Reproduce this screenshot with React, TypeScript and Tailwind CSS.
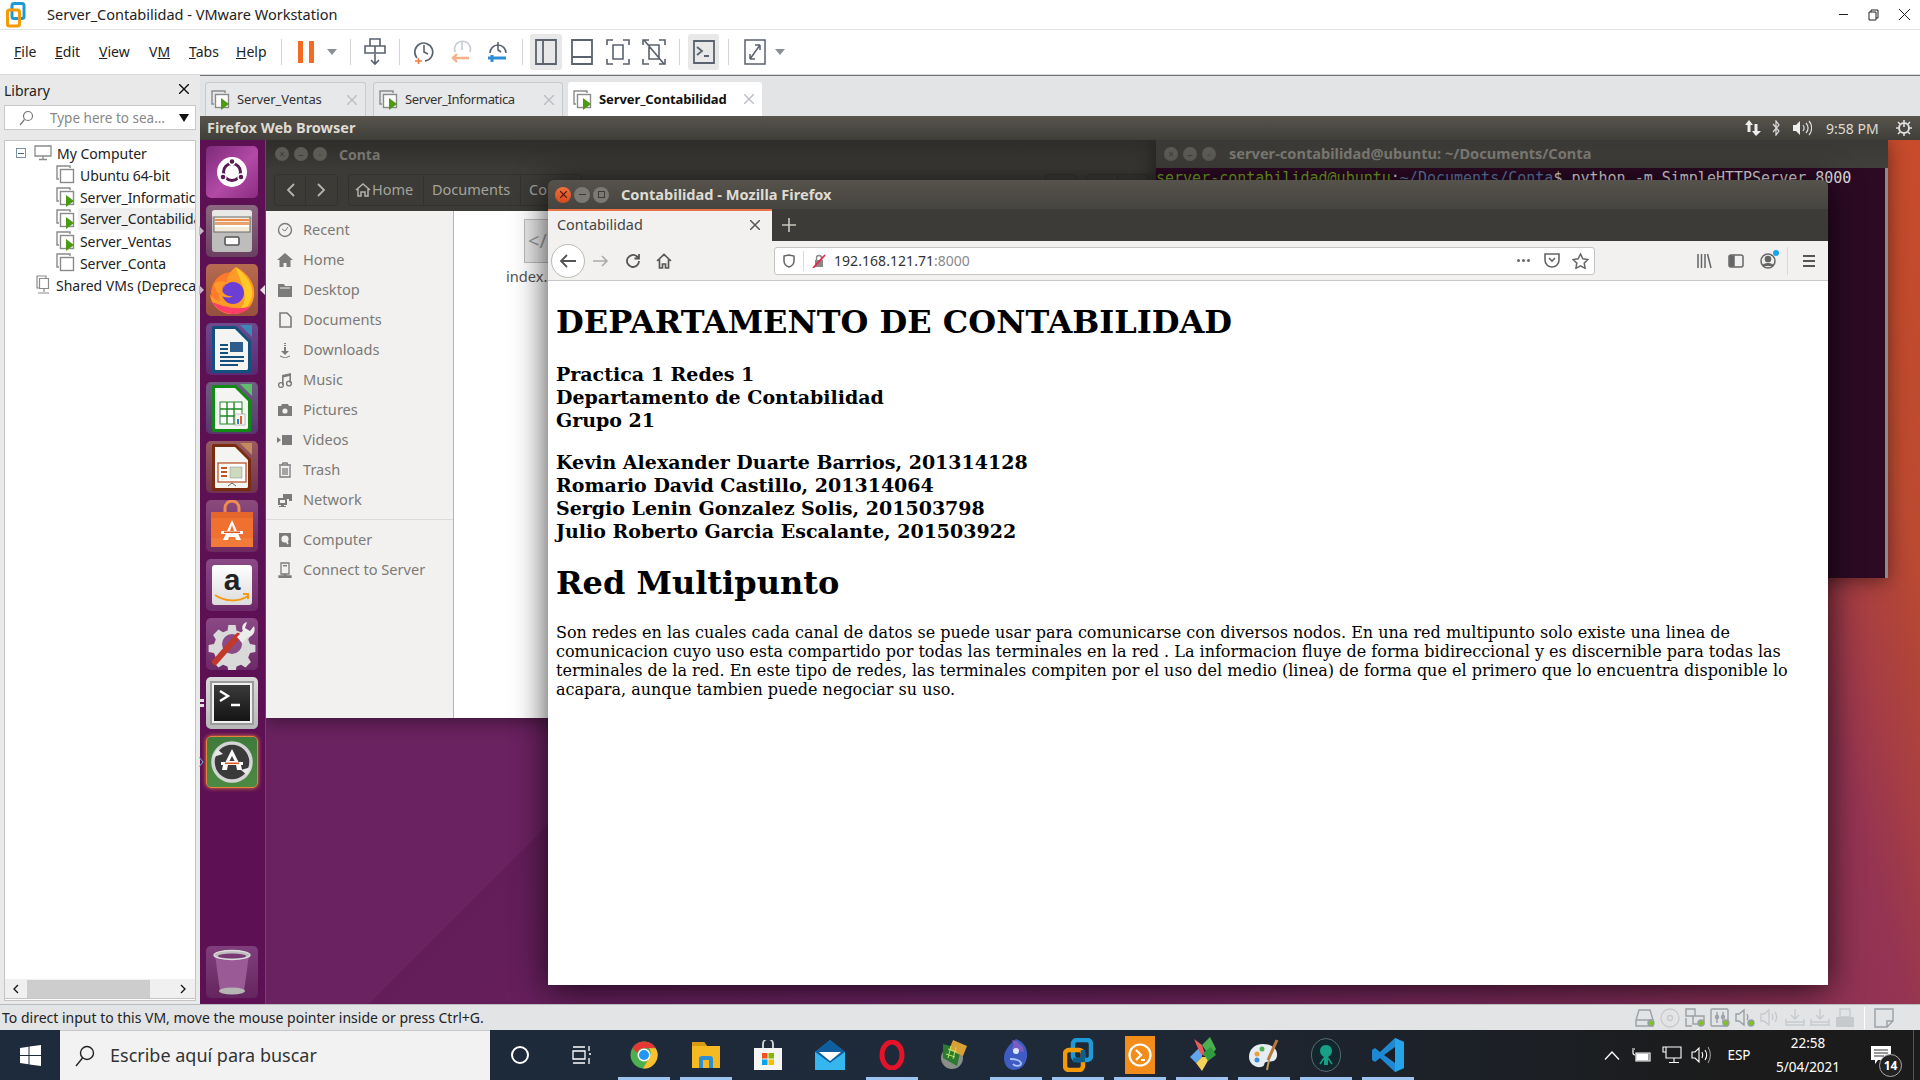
import React from "react";

const Caret = ({ c = "#6b7280" }: { c?: string }) => (
  <svg width="10" height="6" viewBox="0 0 10 6"><path d="M0 0h10L5 6z" fill={c} /></svg>
);

const Sep = () => <div className="w-px h-[26px] bg-[#d4d4d4]" />;

const TB = ({ children, w = 36, active = false }: { children: React.ReactNode; w?: number; active?: boolean }) => (
  <div
    className={active ? "flex items-center justify-center h-[36px] rounded-[3px] bg-[#e8e8e8]" : "flex items-center justify-center h-[36px]"}
    style={{ width: w }}
  >
    {children}
  </div>
);

const S = "#59626e";

function Toolbar() {
  return (
    <div className="h-[45px] bg-white border-b border-[#d9d9d9] flex items-center font-['Noto_Sans',sans-serif] text-[14px] text-[#222] shrink-0">
      <div className="flex items-center pl-[14px] pb-[2px] w-[281px] shrink-0">
        <span className="w-[41px]"><u>F</u>ile</span>
        <span className="w-[44px]"><u>E</u>dit</span>
        <span className="w-[50px]"><u>V</u>iew</span>
        <span className="w-[40px]">V<u>M</u></span>
        <span className="w-[47px]"><u>T</u>abs</span>
        <span><u>H</u>elp</span>
      </div>
      <Sep />
      <div className="w-[16px]" />
      <div className="flex gap-[6px] w-[16px]">
        <div className="w-[5px] h-[22px] bg-[#f26b21]" />
        <div className="w-[5px] h-[22px] bg-[#f26b21]" />
      </div>
      <div className="w-[28px] flex justify-center pl-[8px]"><Caret c="#8a8f96" /></div>
      <div className="w-[8px]" />
      <Sep />
      <TB w={48}>
        <svg width="24" height="30" viewBox="0 0 24 30" fill="none" stroke={S} strokeWidth="1.6">
          <path d="M7 2h10v7H7zM2 9h20v7H2zM12 9v7M12 17v9M8 23l4 4 4-4" />
        </svg>
      </TB>
      <Sep />
      <TB w={47}>
        <svg width="24" height="26" viewBox="0 0 24 26" fill="none" stroke={S} strokeWidth="1.6">
          <path d="M5 19A9 9 0 1 1 13 22M12 6v7l4 2" />
          <path d="M3 22h7M6.5 19v6" stroke="#f37a3a" />
        </svg>
      </TB>
      <TB w={30}>
        <svg width="24" height="26" viewBox="0 0 24 26" fill="none" stroke="#c7ccd2" strokeWidth="1.6">
          <path d="M5 13A8 8 0 1 1 20 13M12 3v8" />
          <path d="M2 19h17M7 15l-4 4 4 4" stroke="#f7b08a" strokeWidth="2.4" />
        </svg>
      </TB>
      <TB w={41}>
        <svg width="24" height="26" viewBox="0 0 24 26" fill="none" stroke={S} strokeWidth="1.6">
          <path d="M4 14A8 8 0 1 1 20 14M12 3v8l3 2" />
          <path d="M2 19h18" stroke="#2b8ed6" strokeWidth="3" />
          <path d="M6 16v7" stroke="#2b8ed6" strokeWidth="3" />
        </svg>
      </TB>
      <div className="w-[4px]" />
      <Sep />
      <div className="w-[7px]" />
      <TB w={32} active>
        <svg width="22" height="26" viewBox="0 0 22 26" fill="none" stroke={S} strokeWidth="1.8"><path d="M1 1h20v24H1zM8 1v24" /></svg>
      </TB>
      <TB w={40}>
        <svg width="22" height="26" viewBox="0 0 22 26" fill="none" stroke={S} strokeWidth="1.8"><path d="M1 1h20v24H1zM1 18h20" /></svg>
      </TB>
      <TB w={32}>
        <svg width="24" height="26" viewBox="0 0 24 26" fill="none" stroke={S} strokeWidth="1.6"><path d="M1 6V1h6M17 1h6v5M1 20v5h6M23 20v5h-6M7 6h10v14H7z" /></svg>
      </TB>
      <TB w={40}>
        <svg width="24" height="26" viewBox="0 0 24 26" fill="none" stroke={S} strokeWidth="1.6"><path d="M1 6V1h6M17 1h6v5M1 20v5h6M23 20v5h-6M7 6h10v14H7zM2 1l20 24" /></svg>
      </TB>
      <div className="w-[5px]" />
      <Sep />
      <div className="w-[8px]" />
      <TB w={31} active>
        <svg width="22" height="24" viewBox="0 0 22 24" fill="none" stroke={S} strokeWidth="1.8"><path d="M1 1h20v22H1zM4 7l5 4-5 4M11 16h5" /></svg>
      </TB>
      <div className="w-[9px]" />
      <Sep />
      <TB w={51}>
        <svg width="22" height="26" viewBox="0 0 22 26" fill="none" stroke={S} strokeWidth="1.5"><path d="M1 1h20v24H1zM6 20l10-14M16 6h-5M16 6v5M6 20h5M6 20v-5" /></svg>
      </TB>
      <div className="ml-[-5px]"><Caret c="#8a8f96" /></div>
    </div>
  );
}

const VmIcon = ({ run }: { run?: boolean }) => (
  <svg className="shrink-0" width="20" height="20" viewBox="0 0 20 20" fill="none">
    <path d="M3 14H1V1h13v2" stroke="#8a8a8a" strokeWidth="1.4" />
    <rect x="4.5" y="4.5" width="13" height="13" fill="#fff" stroke="#8a8a8a" strokeWidth="1.4" />
    {run && <path d="M10 8l8 6-8 6z" fill="#4c9a12" />}
  </svg>
);

const MonitorIcon = () => (
  <svg width="18" height="16" viewBox="0 0 18 16" fill="none" stroke="#8b8b8b" strokeWidth="1.3"><path d="M1 1h16v10H1zM9 11v3M5 14.5h8" /></svg>
);

function Library() {
  return (
    <div className="w-[200px] shrink-0 bg-[#e9e9ea] flex flex-col font-['Noto_Sans',sans-serif] text-[14px] text-[#222]">
      <div className="h-[30px] flex items-center justify-between pl-[4px] pr-[11px]">
        <span>Library</span>
        <svg className="mb-[2px]" width="10" height="10" viewBox="0 0 10 10" stroke="#111" strokeWidth="1.4"><path d="M0 0l10 10M10 0L0 10" /></svg>
      </div>
      <div className="mx-[4px] w-[192px] h-[25px] bg-white border border-[#c9c9c9] flex items-center pl-[13px] pr-[6px] shrink-0">
        <svg width="16" height="16" viewBox="0 0 16 16" fill="none" stroke="#777" strokeWidth="1.2"><circle cx="10" cy="6" r="4.5" /><path d="M6.5 9.5L2 15" /></svg>
        <span className="ml-[16px] text-[#888] flex-1 text-[13.5px] pt-[2px]">Type here to sea...</span>
        <svg width="10" height="8" viewBox="0 0 10 8"><path d="M0 0h10L5 8z" fill="#111" /></svg>
      </div>
      <div className="h-[10px] shrink-0" />
      <div className="mx-[4px] w-[192px] flex-1 bg-white border border-[#c4c4c4] pt-[1px] overflow-hidden">
        <div className="h-[22px] flex items-center pl-[11px] whitespace-nowrap">
          <div className="w-[10px] h-[10px] border border-[#7d90a8] flex items-center justify-center"><div className="w-[6px] h-px bg-[#4a5a70]" /></div>
          <div className="ml-[8px]"><MonitorIcon /></div>
          <span className="ml-[5px]">My Computer</span>
        </div>
        <div>
          {[
            ["Ubuntu 64-bit", false, false],
            ["Server_Informatica", true, false],
            ["Server_Contabilidad", true, true],
            ["Server_Ventas", true, false],
            ["Server_Conta", false, false],
          ].map(([n, r, s]) => (
            <div key={n as string} className="h-[22px] flex items-center pl-[51px] whitespace-nowrap overflow-hidden">
              <div className="w-[22px] shrink-0"><VmIcon run={r as boolean} /></div>
              <div className={s ? "bg-[#f0f0f0] flex-1 h-[22px] leading-[22px] pl-[2px] overflow-hidden tracking-[-0.1px]" : "flex-1 pl-[2px] overflow-hidden tracking-[-0.1px]"}>{n as string}</div>
            </div>
          ))}
        </div>
        <div className="h-[22px] flex items-center pl-[31px] whitespace-nowrap overflow-hidden">
          <svg className="shrink-0" width="14" height="20" viewBox="0 0 14 20" fill="none" stroke="#8b8b8b" strokeWidth="1.2"><path d="M3 13H1V1h9v2M3.5 3.5h9v10h-9zM8 14v3M2 18h11" /></svg>
          <span className="ml-[6px]">Shared VMs (Deprecated)</span>
        </div>
      </div>
      <div className="mx-[4px] w-[192px] h-[20px] bg-[#f0f0f0] border border-t-0 border-[#c4c4c4] flex items-center shrink-0 mt-[-22px] mb-[2px] relative">
        <svg className="ml-[8px]" width="6" height="10" viewBox="0 0 6 10" fill="none" stroke="#111" strokeWidth="1.3"><path d="M5 1L1 5l4 4" /></svg>
        <div className="ml-[8px] w-[123px] h-[18px] bg-[#cdcdcd]" />
        <svg className="ml-[30px]" width="6" height="10" viewBox="0 0 6 10" fill="none" stroke="#111" strokeWidth="1.3"><path d="M1 1l4 4-4 4" /></svg>
      </div>
      <div className="h-[3px] shrink-0" />
    </div>
  );
}

const VmTab = ({ name, w, active, ml, tight }: { name: string; w: number; active?: boolean; ml: number; tight?: boolean }) => (
  <div
    className={
      active
        ? "h-[34px] bg-white rounded-t-[3px] flex items-center pl-[5px] pr-[8px] justify-between text-[#111] font-bold text-[13px]"
        : "h-[34px] bg-[#e7e8ea] border border-b-0 border-[#c9cacc] rounded-t-[3px] flex items-center pl-[5px] pr-[8px] justify-between text-[#333] text-[13px]"
    }
    style={{ width: w, marginLeft: ml }}
  >
    <div className="flex items-center gap-[6px] pt-[1px]">
      <VmIcon run />
      <span className={tight ? "tracking-[-0.35px]" : "tracking-[-0.1px]"}>{name}</span>
    </div>
    <svg width="10" height="10" viewBox="0 0 10 10" stroke="#b9bcc0" strokeWidth="1.3"><path d="M0 0l10 10M10 0L0 10" /></svg>
  </div>
);

function Tile({ bg, children, ring }: { bg: string; children: React.ReactNode; ring?: boolean }) {
  return (
    <div
      className={ring ? "w-[52px] h-[52px] rounded-[5px] overflow-hidden border border-[#e8833c] shadow-[0_0_4px_#e8833c]" : "w-[52px] h-[52px] rounded-[5px] overflow-hidden"}
      style={{ background: bg }}
    >
      {children}
    </div>
  );
}

const TILE = "linear-gradient(180deg,#8a4a86,#6d2a68)";

const DocIcon = ({ border, fold, children }: { border: string; fold: string; children: React.ReactNode }) => (
  <svg width="52" height="52" viewBox="0 0 52 52">
    <path d="M46 2v12L34 2z" fill={fold} />
    <path d="M8 3h22l15 15v30a2 2 0 0 1-2 2H8a2 2 0 0 1-2-2V5a2 2 0 0 1 2-2z" fill={border} />
    <path d="M9 6h20l13 13v26a2 2 0 0 1-1 2H10a1 1 0 0 1-1-1z" fill="#f4f4f2" />
    {children}
  </svg>
);

function Launcher() {
  return (
    <div className="w-[66px] shrink-0 bg-[#5e1055] border-r border-[#7a3a74] flex flex-col items-center pt-[6px] gap-[7px] pr-[1px] relative">
      <Tile bg="linear-gradient(135deg,#7d2a78,#b34aa6 55%,#8a2c80)">
        <svg width="52" height="52" viewBox="0 0 52 52">
          <circle cx="26" cy="26" r="15" fill="#fff" />
          <circle cx="26" cy="26" r="8.5" fill="none" stroke="#5a1a55" strokeWidth="3" />
          <circle cx="26" cy="15.5" r="3" fill="#5a1a55" stroke="#fff" strokeWidth="1.4" />
          <circle cx="17" cy="31" r="3" fill="#5a1a55" stroke="#fff" strokeWidth="1.4" />
          <circle cx="35" cy="31" r="3" fill="#5a1a55" stroke="#fff" strokeWidth="1.4" />
        </svg>
      </Tile>
      <div className="relative">
        <Tile bg="linear-gradient(180deg,#8b6a80,#6a3f60)">
          <svg width="52" height="52" viewBox="0 0 52 52">
            <rect x="6" y="5" width="40" height="42" rx="3" fill="#bdbdbb" />
            <rect x="6" y="5" width="40" height="7" rx="3" fill="#e8e8e6" />
            <rect x="8" y="12" width="36" height="15" fill="#f2ead8" stroke="#6a6a68" strokeWidth="1" />
            <rect x="9" y="14" width="34" height="2" fill="#ef8b4c" />
            <rect x="9" y="17" width="34" height="3" fill="#e9a26e" />
            <rect x="9" y="20" width="34" height="2" fill="#fff" />
            <rect x="19" y="32" width="14" height="8" rx="1.5" fill="#fff" stroke="#555" strokeWidth="1.6" />
          </svg>
        </Tile>
        <svg className="absolute left-[-7px] top-[21px]" width="5" height="10" viewBox="0 0 5 10"><path d="M0 0l5 5-5 5z" fill="#c9b6c8" /></svg>
      </div>
      <div className="relative">
        <Tile bg="linear-gradient(180deg,#b66a50,#96503e)">
          <svg width="52" height="52" viewBox="0 0 52 52">
            <circle cx="26" cy="29" r="21" fill="#ff7a2a" />
            <path d="M30 3c12 6 20 17 18 30-2 12-12 17-22 17C15 50 5 42 4 30c3 5 7 7 10 7-3-8 2-13 8-14-3-5 0-15 8-20z" fill="#ff9a26" />
            <path d="M30 3c10 8 18 18 16 30-2 8-8 14-16 16 8-6 10-14 8-22-1-8-6-14-8-24z" fill="#ffc928" />
            <path d="M6 38c5 8 13 12 21 12 8 0 14-3 18-8-7 3-20 4-39-4z" fill="#ff3d6b" />
            <circle cx="27" cy="29" r="11" fill="#6b3fd6" />
            <path d="M8 20c5-4 12-3 14 0-5 0-6 2-6 5 0 5 6 8 11 7-6 4-17 0-19-12z" fill="#ff9a26" />
          </svg>
        </Tile>
        <svg className="absolute left-[-7px] top-[21px]" width="5" height="10" viewBox="0 0 5 10"><path d="M0 0l5 5-5 5z" fill="#c9b6c8" /></svg>
        <svg className="absolute right-[-7px] top-[21px]" width="5" height="10" viewBox="0 0 5 10"><path d="M5 0L0 5l5 5z" fill="#e6dfe6" /></svg>
      </div>
      <Tile bg="linear-gradient(180deg,#6d4a8e,#5a2a72)">
        <DocIcon border="#14507e" fold="#3d87b8">
          <rect x="14" y="21" width="8" height="2" fill="#14507e" />
          <rect x="14" y="25" width="8" height="2" fill="#14507e" />
          <rect x="14" y="29" width="8" height="2" fill="#14507e" />
          <rect x="24" y="19" width="13" height="10" fill="#2c5d8c" />
          <rect x="14" y="33" width="24" height="2" fill="#14507e" />
          <rect x="14" y="37" width="24" height="2" fill="#14507e" />
          <rect x="14" y="41" width="18" height="2" fill="#14507e" />
        </DocIcon>
      </Tile>
      <Tile bg="linear-gradient(180deg,#6f5f82,#57366e)">
        <DocIcon border="#138a16" fold="#5ec06a">
          <rect x="14" y="20" width="22" height="22" fill="#fff" stroke="#1c8a22" strokeWidth="1" />
          <path d="M14 27h22M14 34h22M21 20v22M28 20v22" stroke="#1c8a22" strokeWidth="1.4" />
          <rect x="29" y="32" width="10" height="11" fill="#f6f6f6" stroke="#999" strokeWidth=".6" />
          <rect x="31" y="37" width="2" height="5" fill="#2a84d2" />
          <rect x="34" y="34" width="2" height="8" fill="#e8601c" />
        </DocIcon>
      </Tile>
      <Tile bg="linear-gradient(180deg,#965a5e,#70324f)">
        <DocIcon border="#7a2c10" fold="#c48a60">
          <rect x="12" y="22" width="28" height="19" fill="#fff" stroke="#b4471c" strokeWidth="1.2" />
          <rect x="15" y="26" width="6" height="2" fill="#c2541c" />
          <rect x="15" y="30" width="6" height="2" fill="#c2541c" />
          <rect x="15" y="34" width="6" height="2" fill="#c2541c" />
          <rect x="24" y="26" width="12" height="11" fill="#ccd9bb" stroke="#999" strokeWidth=".6" />
          <path d="M22 45l4-3 4 3" stroke="#666" fill="none" />
        </DocIcon>
      </Tile>
      <Tile bg="linear-gradient(180deg,#8a4a7c,#6d2a62)">
        <svg width="52" height="52" viewBox="0 0 52 52">
          <path d="M19 12V8a7 7 0 0 1 14 0v4" fill="none" stroke="#ef8a53" strokeWidth="3" />
          <path d="M5 12h42v34a1 1 0 0 1-1 1H6a1 1 0 0 1-1-1z" fill="#f0702f" />
          <path d="M5 12h42v6H5z" fill="#e5662a" />
          <path d="M5 38h42v9H5z" fill="#f27b3a" />
          <path d="M26 20l9 20h-5l-1-3h-6l-1 3h-5z" fill="#fff" />
          <path d="M26 25l2 6h-4z" fill="#f0702f" />
          <rect x="15" y="31" width="22" height="3" fill="#fff" />
          <rect x="18" y="31.5" width="16" height="1.6" fill="#e5561f" />
        </svg>
      </Tile>
      <Tile bg="linear-gradient(180deg,#8a4a86,#6d2a68)">
        <div className="w-[52px] h-[52px] p-[6px]">
          <div className="w-[40px] h-[40px] rounded-[3px] bg-[linear-gradient(180deg,#fff,#dcdcdc)] flex flex-col items-center relative overflow-hidden">
            <span className="font-['Liberation_Sans',sans-serif] font-bold text-[30px] leading-[30px] text-[#222]">a</span>
            <svg className="absolute bottom-[2px]" width="36" height="10" viewBox="0 0 36 10" fill="none" stroke="#f59a16" strokeWidth="2"><path d="M1 2c10 7 24 7 33 1M29 1h5v5" /></svg>
          </div>
        </div>
      </Tile>
      <Tile bg={TILE}>
        <svg width="52" height="52" viewBox="0 0 52 52">
          <path d="M22 5h8l1 6 5 2 5-3 6 6-3 5 2 5 6 1v8l-6 1-2 5 3 5-6 6-5-3-5 2-1 6h-8l-1-6-5-2-5 3-6-6 3-5-2-5-6-1v-8l6-1 2-5-3-5 6-6 5 3 5-2z" transform="translate(2.6 2.6) scale(.9)" fill="#d9d9d9" />
          <circle cx="26" cy="26" r="10" fill="#8a4a86" />
          <path d="M9 44l23-26" stroke="#c0392b" strokeWidth="6" strokeLinecap="round" />
          <path d="M31 19l6-6c-2-4 0-8 4-9l-2 6 5 3 4-5c2 5-1 11-6 11l-6 6z" fill="#ececec" />
        </svg>
      </Tile>
      <div className="relative">
        <Tile bg="linear-gradient(180deg,#dadada,#b8b8b8)">
          <div className="w-[52px] h-[52px] p-[4px]">
            <div className="w-[44px] h-[44px] border-[2px] border-[#9a9a9a] bg-[#f0f0f0] p-[2px]">
              <div className="w-full h-full bg-[linear-gradient(180deg,#3a3a3a,#141414)] pt-[5px] pl-[5px]">
                <svg width="24" height="18" viewBox="0 0 24 18" fill="none" stroke="#fff" strokeWidth="2.4"><path d="M1 1l8 5-8 5M12 15h9" /></svg>
              </div>
            </div>
          </div>
        </Tile>
        <div className="absolute left-[-6px] top-[22px] flex flex-col gap-[2px]">
          <div className="w-[4px] h-[3px] bg-[#e6dfe6]" />
          <div className="w-[4px] h-[3px] bg-[#e6dfe6]" />
        </div>
      </div>
      <div className="relative">
        <Tile bg="linear-gradient(180deg,#3f7a3c,#4c8a42)" ring>
          <svg width="50" height="50" viewBox="0 0 50 50">
            <circle cx="25" cy="25" r="19" fill="#3a3a3a" stroke="#d4d4d4" strokeWidth="3.5" />
            <path d="M6 20l4-8 6 5zM44 30l-4 8-6-5z" fill="#e8e8e8" />
            <path d="M25 12l8 16H17z" fill="#fff" />
            <path d="M25 19l2.5 5h-5z" fill="#3a3a3a" />
            <rect x="14" y="25" width="22" height="3" fill="#fff" />
            <rect x="18" y="25.5" width="14" height="1.6" fill="#e5561f" />
            <path d="M16 28h5l-1 5h-5zM29 28h5l1 5h-5z" fill="#fff" />
          </svg>
        </Tile>
        <svg className="absolute left-[-7px] top-[21px]" width="5" height="10" viewBox="0 0 5 10" fill="none" stroke="#6fb5e8"><path d="M0 0l4 5-4 5" /></svg>
      </div>
      <div className="flex-1" />
      <div className="mb-[6px]">
        <Tile bg="linear-gradient(180deg,#7f3f7c,#64265f)">
          <svg width="52" height="52" viewBox="0 0 52 52">
            <path d="M9 9h34l-5 36a4 3 0 0 1-4 2H18a4 3 0 0 1-4-2z" fill="#9a5a96" />
            <ellipse cx="26" cy="9" rx="18" ry="4.5" fill="#bdbdbd" stroke="#dcdcdc" strokeWidth="1.4" />
            <ellipse cx="26" cy="10" rx="14" ry="2.5" fill="#7a3a76" />
            <ellipse cx="26" cy="45" rx="13" ry="3.5" fill="#b5b5b5" />
          </svg>
        </Tile>
      </div>
    </div>
  );
}

const Icon16 = ({ children }: { children: React.ReactNode }) => (
  <svg width="16" height="16" viewBox="0 0 16 16" fill="#7b7b7b" stroke="none">{children}</svg>
);

const SIDE: [string, React.ReactNode][] = [
  ["Recent", <Icon16><circle cx="8" cy="8" r="6.5" fill="none" stroke="#7b7b7b" strokeWidth="1.4" /><path d="M5 7l3 2 3-4" fill="none" stroke="#7b7b7b" /></Icon16>],
  ["Home", <Icon16><path d="M8 1L0 8h2.5v7h4v-4h3v4h4V8H16z" /></Icon16>],
  ["Desktop", <Icon16><path d="M1 2h6l1 2h7v11H1z" /><path d="M3 6h10" stroke="#f2f1f0" /></Icon16>],
  ["Documents", <Icon16><path d="M3 1h7l4 4v10H3z" fill="none" stroke="#7b7b7b" strokeWidth="1.6" /></Icon16>],
  ["Downloads", <Icon16><path d="M7 1h2v1H7zM7 3h2v1H7zM7 5h2v4h3l-4 4-4-4h3z" /><path d="M3 14l5 2 5-2" fill="none" stroke="#7b7b7b" /></Icon16>],
  ["Music", <Icon16><path d="M5 3l9-2v10h-1.6V4L6.6 5.4V13H5z" /><circle cx="4" cy="13" r="2.4" fill="none" stroke="#7b7b7b" strokeWidth="1.4" /><circle cx="12" cy="11.5" r="2.4" fill="none" stroke="#7b7b7b" strokeWidth="1.4" /></Icon16>],
  ["Pictures", <Icon16><path d="M1 4h3l1-2h6l1 2h3v10H1z" /><circle cx="8" cy="9" r="2.6" fill="#f2f1f0" /></Icon16>],
  ["Videos", <Icon16><path d="M5 3h10v10H5zM0 5l4 3-4 3z" /></Icon16>],
  ["Trash", <Icon16><path d="M2 3h12M5 3l1-2h4l1 2M3 4v11h10V4M6 6v7M8 6v7M10 6v7" fill="none" stroke="#7b7b7b" strokeWidth="1.3" /></Icon16>],
  ["Network", <Icon16><path d="M6 2h9v7h-3V7H6zM1 6h9v7H7v1h2v1H2v-1h2v-1H1z" /><path d="M3 8h5v3H3z" fill="#f2f1f0" /></Icon16>],
];

const SIDE2: [string, React.ReactNode][] = [
  ["Computer", <Icon16><path d="M2 1h12v14H2z" /><circle cx="8" cy="7" r="3.6" fill="#f2f1f0" /><path d="M8 7l3 5" stroke="#f2f1f0" strokeWidth="1.6" /></Icon16>],
  ["Connect to Server", <Icon16><path d="M4 1h8v11H4zM2 14h12v1.4H2zM7.2 12h1.6v2H7.2z" fill="none" stroke="#7b7b7b" strokeWidth="1.3" /><path d="M6 3h4v1.4H6z" /></Icon16>],
];

const TrafficDim = () => (
  <div className="flex gap-[5px] items-center">
    {["×", "–", "▫"].map((g) => (
      <div key={g} className="w-[14px] h-[14px] rounded-full bg-[#5d5b56] flex items-center justify-center text-[10px] leading-none text-[#3c3b37] font-['Noto_Sans',sans-serif]">{g}</div>
    ))}
  </div>
);

function Nautilus() {
  return (
    <div className="absolute left-0 top-0 w-[890px] h-[578px] flex flex-col font-['Noto_Sans',sans-serif] shadow-[0_3px_18px_rgba(0,0,0,0.45)]">
      <div className="h-[28px] bg-[linear-gradient(180deg,#2e2d2a,#3b3a36)] flex items-center pl-[9px] shrink-0">
        <TrafficDim />
        <span className="ml-[12px] text-[14px] font-bold text-[#77756e]">Conta</span>
      </div>
      <div className="h-[43px] bg-[#3c3b37] flex items-center pl-[8px] shrink-0 text-[14.5px] text-[#a5a39c]">
        <div className="w-[64px] h-[32px] border border-[#33322f] rounded-[4px] flex">
          <div className="w-[32px] border-r border-[#33322f] flex items-center justify-center"><svg width="9" height="14" viewBox="0 0 9 14" fill="none" stroke="#b5b3ac" strokeWidth="1.8"><path d="M8 1L2 7l6 6" /></svg></div>
          <div className="w-[32px] flex items-center justify-center"><svg width="9" height="14" viewBox="0 0 9 14" fill="none" stroke="#b5b3ac" strokeWidth="1.8"><path d="M1 1l6 6-6 6" /></svg></div>
        </div>
        <div className="ml-[10px] h-[32px] border border-[#33322f] rounded-[4px] flex items-center">
          <div className="w-[75px] h-full border-r border-[#33322f] flex items-center pl-[6px] gap-[1px]">
            <svg width="16" height="14" viewBox="0 0 16 14" fill="none" stroke="#b5b3ac" strokeWidth="1.5"><path d="M1 7l7-6 7 6M3 6v7h3V9h4v4h3V6" /></svg>
            <span>Home</span>
          </div>
          <div className="w-[97px] h-full border-r border-[#33322f] flex items-center pl-[8px]">Documents</div>
          <div className="w-[60px] pl-[8px]">Conta</div>
        </div>
        <div className="ml-[463px] w-[31px] h-[32px] border border-[#33322f] rounded-[4px]" />
        <div className="ml-[10px] w-[63px] h-[32px] border border-[#33322f] rounded-[4px] flex"><div className="w-[31px] border-r border-[#33322f]" /></div>
      </div>
      <div className="flex-1 flex min-h-0">
        <div className="w-[188px] bg-[#f2f1f0] border-r border-[#b5b5b3] pt-[4px] text-[14.6px] text-[#7b7a76] shrink-0">
          {SIDE.map(([n, ic]) => (
            <div key={n} className="h-[30px] flex items-center pl-[11px]">
              {ic}
              <span className="ml-[10px]">{n}</span>
            </div>
          ))}
          <div className="h-px bg-[#dcdbd9] mt-[4px] mb-[5px]" />
          {SIDE2.map(([n, ic]) => (
            <div key={n} className="h-[30px] flex items-center pl-[11px]">
              {ic}
              <span className="ml-[10px]">{n}</span>
            </div>
          ))}
        </div>
        <div className="flex-1 bg-white pl-[52px] pt-[8px] text-[14.6px] text-[#555]">
          <div className="w-[44px] h-[44px] bg-[#e9e9e9] border border-[#bdbdbd] ml-[18px] flex items-center pl-[3px] text-[#999] text-[20px]">&lt;/</div>
          <div className="mt-[3px]">index.html</div>
        </div>
      </div>
    </div>
  );
}

function Terminal() {
  return (
    <div className="absolute left-[890px] top-0 w-[732px] h-[438px] flex flex-col shadow-[0_3px_18px_rgba(0,0,0,0.45)]">
      <div className="h-[28px] bg-[linear-gradient(180deg,#3a3935,#403f3b)] flex items-center pl-[8px] shrink-0 font-['Noto_Sans',sans-serif]">
        <TrafficDim />
        <span className="ml-[13px] text-[14.6px] font-bold text-[#7b7973] whitespace-nowrap">server-contabilidad@ubuntu: ~/Documents/Conta</span>
      </div>
      <div className="flex-1 bg-[#2c0a24] border-r-[3px] border-[#8d8a8d] font-['DejaVu_Sans_Mono',monospace] text-[15px] leading-[18px] whitespace-nowrap pt-[1px] overflow-hidden">
        <span className="text-[#6fa51f]">server-contabilidad@ubuntu</span>
        <span className="text-[#ddd]">:</span>
        <span className="text-[#5f7ea8]">~/Documents/Conta</span>
        <span className="text-[#ddd]">$ python -m SimpleHTTPServer 8000</span>
      </div>
    </div>
  );
}

function Firefox() {
  return (
    <div className="absolute left-[282px] top-[40px] w-[1280px] h-[805px] flex flex-col rounded-t-[6px] overflow-hidden shadow-[0_4px_34px_rgba(0,0,0,0.75)] font-['Noto_Sans',sans-serif]">
      <div className="h-[29px] shrink-0 bg-[linear-gradient(180deg,#56534c,#46443f)] flex items-center pl-[7px]">
        <div className="flex gap-[3px] items-center">
          <div className="w-[16px] h-[16px] rounded-full bg-[linear-gradient(180deg,#f0703c,#d64a1e)] flex items-center justify-center">
            <svg width="7" height="7" viewBox="0 0 7 7" stroke="#4a1a08" strokeWidth="1.2"><path d="M0 0l7 7M7 0L0 7" /></svg>
          </div>
          <div className="w-[16px] h-[16px] rounded-full bg-[#7b7972] flex items-center justify-center"><div className="w-[7px] h-[1.5px] bg-[#3c3b37]" /></div>
          <div className="w-[16px] h-[16px] rounded-full bg-[#7b7972] flex items-center justify-center"><div className="w-[7px] h-[7px] border border-[#3c3b37]" /></div>
        </div>
        <span className="ml-[12px] text-[14.6px] font-bold text-[#dfdbd2]">Contabilidad - Mozilla Firefox</span>
      </div>
      <div className="h-[32px] shrink-0 bg-[#3c3b37] flex items-stretch">
        <div className="w-[224px] bg-[#f2f1f0] border-t-[2px] border-[#e9744a] flex items-center pl-[9px] pr-[12px] pb-[3px] justify-between text-[14.4px] text-[#444]">
          <span>Contabilidad</span>
          <svg width="10" height="10" viewBox="0 0 10 10" stroke="#555" strokeWidth="1.5"><path d="M0 0l10 10M10 0L0 10" /></svg>
        </div>
        <div className="ml-[10px] flex items-center">
          <svg width="14" height="14" viewBox="0 0 14 14" stroke="#c9c7c0" strokeWidth="1.6"><path d="M7 0v14M0 7h14" /></svg>
        </div>
      </div>
      <div className="h-[40px] shrink-0 bg-[#f2f1f0] border-b border-[#c8c8c6] flex items-center relative">
        <div className="ml-[3px] w-[34px] h-[34px] rounded-full bg-white border border-[#b9b9b7] flex items-center justify-center shrink-0">
          <svg width="18" height="16" viewBox="0 0 18 16" fill="none" stroke="#555" strokeWidth="1.8"><path d="M17 8H2M8 2L2 8l6 6" /></svg>
        </div>
        <svg className="ml-[8px] shrink-0" width="16" height="14" viewBox="0 0 16 14" fill="none" stroke="#aaa" strokeWidth="1.6"><path d="M0 7h14M9 2l5 5-5 5" /></svg>
        <svg className="ml-[16px] shrink-0" width="16" height="16" viewBox="0 0 16 16" fill="none" stroke="#555" strokeWidth="1.8"><path d="M14 8a6 6 0 1 1-2-4.5L14 5.5M14 1v4.5H9.5" /></svg>
        <svg className="ml-[15px] shrink-0" width="16" height="16" viewBox="0 0 16 16" fill="none" stroke="#555" strokeWidth="1.7"><path d="M1 8l7-6.5L15 8M3.5 6.5V15h3v-4h3v4h3V6.5" /></svg>
        <div className="ml-[102px] w-[821px] h-[28px] bg-white border border-[#c4c4c2] rounded-[3px] flex items-center shrink-0 text-[14px]">
          <div className="w-[28px] flex justify-center">
            <svg width="12" height="14" viewBox="0 0 12 14" fill="none" stroke="#666" strokeWidth="1.5"><path d="M1 2l5-1 5 1v5c0 3-2 5-5 6-3-1-5-3-5-6z" /></svg>
          </div>
          <div className="w-px h-[20px] bg-[#d9d9d9]" />
          <svg className="ml-[8px]" width="14" height="14" viewBox="0 0 14 14"><path d="M3 6h8v7H3z" fill="#888" /><path d="M4.5 6V4a2.5 2.5 0 0 1 5 0v2" fill="none" stroke="#888" strokeWidth="1.4" /><path d="M1 14L13 1" stroke="#e8264a" strokeWidth="1.8" /></svg>
          <span className="ml-[8px] text-[#333] tracking-[0.05px]">192.168.121.71</span>
          <span className="text-[#8a8a8a]">:8000</span>
          <div className="flex-1" />
          <div className="flex gap-[2px] mr-[14px]">
            <div className="w-[3px] h-[3px] rounded-full bg-[#666]" />
            <div className="w-[3px] h-[3px] rounded-full bg-[#666]" />
            <div className="w-[3px] h-[3px] rounded-full bg-[#666]" />
          </div>
          <svg className="mr-[12px]" width="16" height="15" viewBox="0 0 16 15" fill="none" stroke="#666" strokeWidth="1.6"><path d="M1 1h14v6c0 4-3 7-7 7s-7-3-7-7zM5 5l3 3 3-3" /></svg>
          <svg className="mr-[5px]" width="17" height="16" viewBox="0 0 17 16" fill="none" stroke="#666" strokeWidth="1.5"><path d="M8.5 1l2.3 4.8 5.2.7-3.8 3.6.9 5.2-4.6-2.5-4.6 2.5.9-5.2L1 6.5l5.2-.7z" /></svg>
        </div>
        <div className="flex-1" />
        <div className="flex items-center shrink-0 pr-[12px]">
          <svg width="16" height="16" viewBox="0 0 16 16" fill="none" stroke="#666" strokeWidth="1.5"><path d="M2 1v14M5.5 1v14M9 1v14M11.5 1l3.5 14" /></svg>
          <svg className="ml-[16px]" width="16" height="16" viewBox="0 0 16 16" fill="none" stroke="#666" strokeWidth="1.5"><rect x="1" y="2" width="14" height="12" rx="2" /><path d="M2 3h4v10H2z" fill="#666" /></svg>
          <div className="ml-[16px] relative">
            <svg width="16" height="16" viewBox="0 0 16 16" fill="none" stroke="#666" strokeWidth="1.5"><circle cx="8" cy="8" r="7" /><circle cx="8" cy="6" r="2.6" fill="#666" /><path d="M3 13c1-3 9-3 10 0" fill="#666" /></svg>
            <div className="absolute right-[-3px] top-[-3px] w-[6px] h-[6px] rounded-full bg-[#1aa3ee]" />
          </div>
          <div className="ml-[11px] w-px h-[28px] bg-[#dadad8]" />
          <svg className="ml-[14px]" width="14" height="14" viewBox="0 0 14 14" stroke="#555" strokeWidth="1.8"><path d="M1 2h12M1 7h12M1 12h12" /></svg>
        </div>
      </div>
      <div className="flex-1 bg-white px-[8px] pt-[1px] text-black font-['DejaVu_Serif',serif] overflow-hidden">
        <h1 className="text-[32px] leading-[37px] font-bold mt-[22px] mb-[22px]">DEPARTAMENTO DE CONTABILIDAD</h1>
        <h3 className="text-[19px] leading-[23px] font-bold mb-[19px]">
          Practica 1 Redes 1<br />Departamento de Contabilidad<br />Grupo 21
        </h3>
        <h3 className="text-[19px] leading-[23px] font-bold">
          Kevin Alexander Duarte Barrios, 201314128<br />Romario David Castillo, 201314064<br />Sergio Lenin Gonzalez Solis, 201503798<br />Julio Roberto Garcia Escalante, 201503922
        </h3>
        <h1 className="text-[32px] leading-[37px] font-bold mt-[22px] mb-[21px]">Red Multipunto</h1>
        <p className="text-[16px] leading-[19px]">
          Son redes en las cuales cada canal de datos se puede usar para comunicarse con diversos nodos. En una red multipunto solo existe una linea de comunicacion cuyo uso esta compartido por todas las terminales en la red . La informacion fluye de forma bidireccional y es discernible para todas las terminales de la red. En este tipo de redes, las terminales compiten por el uso del medio (linea) de forma que el primero que lo encuentra disponible lo acapara, aunque tambien puede negociar su uso.
        </p>
      </div>
    </div>
  );
}

function VmArea() {
  return (
    <div className="flex-1 min-w-0 flex flex-col border-t border-[#6f7276] font-['Noto_Sans',sans-serif]">
      <div className="h-[40px] shrink-0 bg-[#e3e4e6] flex items-end">
        <VmTab name="Server_Ventas" w={161} ml={5} />
        <VmTab name="Server_Informatica" w={190} ml={7} tight />
        <VmTab name="Server_Contabilidad" w={194} ml={5} active />
      </div>
      <div className="h-[24px] shrink-0 bg-[linear-gradient(180deg,#57544d,#3f3e39)] flex items-center justify-between pl-[7px] pr-[8px] text-[14px] text-[#dfdbd2]">
        <span className="font-bold text-[14.5px]">Firefox Web Browser</span>
        <div className="flex items-center">
          <svg width="16" height="18" viewBox="0 0 16 18" fill="#eee"><path d="M4 1l4 5H5.5v7h-3V6H0zM11 17l-4-5h2.5V5h3v7H16z" /></svg>
          <svg className="ml-[11px]" width="8" height="16" viewBox="0 0 8 16" fill="none" stroke="#ddd" strokeWidth="1.2"><path d="M1 4l6 7-3 4V1l3 4-6 7" /></svg>
          <svg className="ml-[12px]" width="20" height="16" viewBox="0 0 20 16"><path d="M1 5h3l4-4v14l-4-4H1z" fill="#eee" /><path d="M11 5c1.5 2 1.5 4 0 6M14 3c2.5 3 2.5 7 0 10M17 1c3.5 4 3.5 10 0 14" fill="none" stroke="#ddd" strokeWidth="1.2" /></svg>
          <span className="ml-[14px] w-[61px] whitespace-nowrap">9:58 PM</span>
          <svg className="ml-[9px]" width="16" height="16" viewBox="0 0 16 16" fill="none" stroke="#ddd" strokeWidth="2"><circle cx="8" cy="8" r="5" /><path d="M8 0v7M8 13v3M2 2l2 2M12 12l2 2M14 2l-2 2M4 12l-2 2M0 8h3M13 8h3" strokeWidth="1.6" /></svg>
        </div>
      </div>
      <div className="flex-1 flex min-h-0">
        <Launcher />
        <div className="flex-1 relative overflow-hidden bg-[linear-gradient(135deg,transparent_38.4%,rgba(50,0,50,0.14)_38.4%,transparent_62%),linear-gradient(75deg,#6b2260_0%,#6b2260_40%,#7f2b58_72%,#953453_87%,#bb4a30_94%,#c84b2b_100%)]">
          <Nautilus />
          <Terminal />
          <Firefox />
        </div>
      </div>
    </div>
  );
}

const G = "#9aa0a6";
const dot = <circle cx="16" cy="15" r="3" fill="#7ec31c" />;

function StatusBar() {
  return (
    <div className="h-[26px] shrink-0 bg-[#e3e4e6] border-t border-[#b9babc] flex items-center justify-between pl-[2px] font-['Noto_Sans',sans-serif] text-[14px] text-[#222]">
      <span>To direct input to this VM, move the mouse pointer inside or press Ctrl+G.</span>
      <div className="flex items-center gap-[5px] pr-[26px]">
        <svg width="20" height="20" viewBox="0 0 20 20" fill="none" stroke={G} strokeWidth="1.4"><path d="M1 12L4 2h11l3 10v6H1zM1 12h17" />{dot}</svg>
        <svg width="20" height="20" viewBox="0 0 20 20" fill="none" stroke="#c7cacd" strokeWidth="1.3"><circle cx="10" cy="10" r="9" /><circle cx="10" cy="10" r="2.5" /></svg>
        <svg width="20" height="20" viewBox="0 0 20 20" fill="none" stroke={G} strokeWidth="1.4"><path d="M1 1h9v7H1zM8 8h11v8H8zM1 10v8h6" />{dot}</svg>
        <svg width="20" height="20" viewBox="0 0 20 20" fill="none" stroke={G} strokeWidth="1.4"><rect x="1" y="1" width="17" height="17" rx="1" /><path d="M7 4v11M13 4v11" /><circle cx="7" cy="9" r="1.5" /><circle cx="13" cy="9" r="1.5" />{dot}</svg>
        <svg width="20" height="20" viewBox="0 0 20 20" fill="none" stroke={G} strokeWidth="1.4"><path d="M1 6h3l5-4v15l-5-4H1zM12 6c1 2 1 4 0 6" />{dot}</svg>
        <svg width="20" height="20" viewBox="0 0 20 20" fill="none" stroke="#c7cacd" strokeWidth="1.4"><path d="M1 6h3l5-4v15l-5-4H1zM12 6c1 2 1 4 0 6M15 4c2 3 2 7 0 10" /></svg>
        <svg width="20" height="20" viewBox="0 0 20 20" fill="none" stroke="#c7cacd" strokeWidth="1.4"><path d="M10 1v9M6 7l4 4 4-4M1 11v6h18v-6M1 14h18" /></svg>
        <svg width="20" height="20" viewBox="0 0 20 20" fill="none" stroke="#c7cacd" strokeWidth="1.4"><path d="M10 1v9M6 7l4 4 4-4M1 11v6h18v-6M1 14h18" /></svg>
        <svg width="20" height="20" viewBox="0 0 18 20"><path d="M4 1h10v8H4z" fill="none" stroke="#c7cacd" strokeWidth="1.4" /><path d="M0 9h18v10H0z" fill="#c7cacd" /></svg>
        <div className="w-px h-[22px] bg-white mx-[4px]" />
        <svg width="20" height="20" viewBox="0 0 20 20" fill="none" stroke={G} strokeWidth="1.4"><path d="M1 1h18v12l-6 6H1zM13 19v-6h6" /></svg>
      </div>
    </div>
  );
}

const TI = ({ children, run, w = 62 }: { children: React.ReactNode; run?: boolean; w?: number }) => (
  <div className="h-[50px] relative flex items-center justify-center shrink-0" style={{ width: w }}>
    {children}
    {run && <div className="absolute bottom-0 left-[5px] right-[5px] h-[3px] bg-[#9dc3f0]" />}
  </div>
);

function Taskbar() {
  return (
    <div className="h-[50px] shrink-0 flex bg-[linear-gradient(90deg,#1d2b3c_0%,#1f2a39_55%,#1c2026_78%,#1b1b1b_90%)] font-['Noto_Sans',sans-serif]">
      <div className="w-[60px] flex items-center justify-center shrink-0">
        <svg width="21" height="21" viewBox="0 0 21 21" fill="#fff"><path d="M0 3l8.5-1.200V10H0zM9.500 1.600L21 0v10H9.500zM0 11h8.500v8.200L0 18zM9.500 11H21v10L9.500 19.400z" /></svg>
      </div>
      <div className="w-[430px] bg-[#f2f2f2] flex items-center pl-[14px] border-t border-[#c8c8c8] shrink-0 text-[18px] text-[#333]">
        <svg width="22" height="22" viewBox="0 0 22 22" fill="none" stroke="#222" strokeWidth="1.4"><circle cx="13" cy="8" r="6.5" /><path d="M8.5 13L2 21" /></svg>
        <span className="ml-[14px]">Escribe aquí para buscar</span>
      </div>
      <TI w={60}><div className="w-[18px] h-[18px] rounded-full border-[2.5px] border-white" /></TI>
      <TI w={63}>
        <svg width="20" height="20" viewBox="0 0 20 20" fill="none" stroke="#fff" strokeWidth="1.3"><path d="M1 2h12M1 6h12v8H1zM1 18h12M17 1v5M17 9h2M17 13v6" /></svg>
      </TI>
      <TI run>
        <svg width="28" height="28" viewBox="0 0 28 28">
          <circle cx="14" cy="14" r="13.5" fill="#4caf50" />
          <path d="M14 .5A13.5 13.5 0 0 1 25.7 7.200H14a7 7 0 0 0-6.700 5L2.300 7.200A13.5 13.5 0 0 1 14 .5z" fill="#e53935" />
          <path d="M25.7 7.200A13.5 13.5 0 0 1 13 27.500l6-10.500a7 7 0 0 0 0-9.800z" fill="#fbc02d" />
          <circle cx="14" cy="14" r="6.5" fill="#fff" />
          <circle cx="14" cy="14" r="5" fill="#2196f3" />
        </svg>
      </TI>
      <TI run>
        <svg width="28" height="26" viewBox="0 0 28 26">
          <path d="M0 0h12l3 4h13v22H0z" fill="#f5b921" />
          <path d="M0 0h12l3 4H0z" fill="#d99a13" />
          <path d="M7 26v-9a3 3 0 0 1 3-3h8a3 3 0 0 1 3 3v9h-4v-8h-6v8z" fill="#2b8fd6" />
        </svg>
      </TI>
      <TI>
        <svg width="28" height="30" viewBox="0 0 28 30">
          <path d="M9 8V4a5 5 0 0 1 10 0v4" fill="none" stroke="#ddd" strokeWidth="1.8" />
          <rect x="0" y="8" width="28" height="22" fill="#f5f5f5" />
          <rect x="8" y="13" width="5.5" height="5.5" fill="#f25022" />
          <rect x="14.5" y="13" width="5.5" height="5.5" fill="#7fba00" />
          <rect x="8" y="19.5" width="5.5" height="5.5" fill="#00a4ef" />
          <rect x="14.5" y="19.5" width="5.5" height="5.5" fill="#ffb900" />
        </svg>
      </TI>
      <TI>
        <svg width="30" height="30" viewBox="0 0 30 30">
          <path d="M15 0l15 12v18H0V12z" fill="#1f8fd8" />
          <path d="M0 12l15 11 15-11L15 0z" fill="#0f5f9e" />
          <path d="M4 12h22l-11 9z" fill="#fff" />
          <path d="M0 30V12l15 11 15-11v18z" fill="#35b6ee" />
        </svg>
      </TI>
      <TI run>
        <svg width="26" height="30" viewBox="0 0 26 30" fill="none"><ellipse cx="13" cy="15" rx="10" ry="13" stroke="#e5132a" strokeWidth="5" /></svg>
      </TI>
      <TI>
        <svg width="30" height="30" viewBox="0 0 30 30">
          <circle cx="13" cy="18" r="11" fill="#8a8f8a" />
          <path d="M4 4l18 5-4 17-14-8z" fill="#2b7a2f" />
          <path d="M14 0l14 6-4 10L10 10z" fill="#d9a035" />
          <path d="M9 9l9 3M7 14l9 3M12 6l-3 12M17 7l-3 12" stroke="#bde36a" strokeWidth="1" />
        </svg>
      </TI>
      <TI run>
        <svg width="28" height="32" viewBox="0 0 28 32">
          <path d="M14 0c8 3 12 10 11 18-1 8-7 13-13 13S2 26 2 19C2 11 8 5 14 0z" fill="#3f5cc4" />
          <path d="M10 1l6 2-3 5z" fill="#8d5cc4" />
          <path d="M14 3c5 2 8 6 8 10l-12-2c0-3 2-6 4-8z" fill="#7a5cc4" />
          <circle cx="14" cy="12" r="3" fill="#dbe6ff" />
          <path d="M8 20c4 0 10 1 11 4s-6 4-8 1" fill="none" stroke="#a8c4ff" strokeWidth="1.8" />
        </svg>
      </TI>
      <TI run>
        <svg width="30" height="34" viewBox="0 0 30 34" fill="none">
          <rect x="10" y="2" width="18" height="20" rx="4" stroke="#1e9ad6" strokeWidth="4.5" />
          <rect x="2" y="12" width="18" height="20" rx="4" stroke="#f59a00" strokeWidth="4.5" />
          <path d="M10 22h10V12" stroke="#0e5f8e" strokeWidth="4.5" />
        </svg>
      </TI>
      <TI run>
        <div className="w-[30px] h-[38px] bg-[#f28d1c] flex items-center justify-center">
          <svg width="24" height="24" viewBox="0 0 24 24" fill="none" stroke="#fff" strokeWidth="2.2"><circle cx="12" cy="12" r="10.5" /><path d="M8 7l5 5-5 5M13 17h4" /></svg>
        </div>
      </TI>
      <TI run>
        <svg width="32" height="36" viewBox="0 0 32 36">
          <path d="M16 8L4 20l6 6 6-6z" fill="#5ea7f0" />
          <path d="M16 8l8-8 6 12-6 8z" fill="#4caf50" />
          <path d="M16 20l8 0-8 14-6-8z" fill="#f5d35a" />
          <path d="M8 2l8 6 4 12-6-4z" fill="#e85c5c" />
          <path d="M17 16l8-6 5 8-8 6z" fill="#2e9b3e" />
        </svg>
      </TI>
      <TI run>
        <svg width="34" height="34" viewBox="0 0 34 34">
          <path d="M16 6C7 6 2 12 2 19s7 11 12 10 2-4 5-5 10 1 11-6S25 6 16 6z" fill="#e6edf2" />
          <circle cx="10" cy="16" r="2.5" fill="#e8a13c" />
          <circle cx="15" cy="11" r="2.5" fill="#4caf50" />
          <circle cx="10" cy="22" r="2.5" fill="#3a8ed6" />
          <path d="M21 22L30 2" stroke="#b9793a" strokeWidth="3" />
          <path d="M20 32l2-10" stroke="#c49a5a" strokeWidth="2" />
        </svg>
      </TI>
      <TI run>
        <svg width="30" height="34" viewBox="0 0 30 34">
          <ellipse cx="15" cy="17" rx="14.5" ry="16.5" fill="#12262e" stroke="#5a6a70" strokeWidth="1" />
          <path d="M15 7c4 0 6 3 6 6s-2 5-4 6v8h-4v-8c-2-1-4-3-4-6s2-6 6-6z" fill="#16a085" />
          <path d="M9 26l4-6M21 26l-4-6" stroke="#16a085" strokeWidth="1.5" />
        </svg>
      </TI>
      <TI run>
        <svg width="32" height="34" viewBox="0 0 32 34">
          <path d="M23 0l9 4v26l-9 4L8 20l-5 4-3-2v-10l3-2 5 4z" fill="#1e88d2" />
          <path d="M23 9v16L12 17z" fill="#1b1f25" />
          <path d="M23 0l9 4v26l-9 4z" fill="#25a4ea" />
        </svg>
      </TI>
      <div className="flex-1" />
      <div className="flex items-center shrink-0 text-white">
        <div className="w-[30px] flex justify-center">
          <svg width="16" height="9" viewBox="0 0 16 9" fill="none" stroke="#fff" strokeWidth="1.3"><path d="M1 8.5L8 1l7 7.5" /></svg>
        </div>
        <div className="w-[30px] flex justify-center">
          <svg width="20" height="14" viewBox="0 0 20 14" fill="none" stroke="#fff" strokeWidth="1.2"><path d="M4 5h14v8H4z" /><path d="M5 6h11v6H5z" fill="#fff" /><path d="M1 2v3a2 2 0 0 0 2 2M0 1h3" /></svg>
        </div>
        <div className="w-[30px] flex justify-center">
          <svg width="20" height="18" viewBox="0 0 20 18" fill="none" stroke="#fff" strokeWidth="1.1"><path d="M4 1h15v11H4zM1 1h3v5H1zM12 12v4M7 16.5h10" /></svg>
        </div>
        <div className="w-[28px] flex justify-center">
          <svg width="20" height="18" viewBox="0 0 20 18" fill="none" stroke="#fff" strokeWidth="1.1"><path d="M1 6h3l4-4v14l-4-4H1zM11 6c1 2 1 4 0 6M14 4c2 3 2 7 0 10" /><path d="M17 1c3 5 3 11 0 16" stroke="#999" /></svg>
        </div>
        <div className="w-[48px] text-center text-[13.5px]">ESP</div>
        <div className="w-[90px] flex flex-col items-center text-[13.5px] leading-[24px]">
          <span>22:58</span>
          <span>5/04/2021</span>
        </div>
        <div className="w-[55px] flex justify-center relative h-[50px] items-center">
          <svg width="20" height="18" viewBox="0 0 20 18"><path d="M0 0h20v14H7l-3 4v-4H0z" fill="#fff" /><path d="M3 4h14M3 7h14M3 10h10" stroke="#333" strokeWidth="1.2" /></svg>
          <div className="absolute left-[26px] top-[24px] w-[23px] h-[23px] rounded-full border border-[#aaa] bg-[#222] flex items-center justify-center text-[12px] font-bold text-white">14</div>
        </div>
        <div className="w-[12px] h-[50px] flex justify-end pr-[6px]"><div className="w-px h-full bg-[#555]" /></div>
      </div>
    </div>
  );
}

export default function App() {
  return (
    <div className="w-[1920px] h-[1080px] flex flex-col overflow-hidden bg-white">
      <div className="h-[30px] shrink-0 bg-white border-b border-[#e3e3e3] flex items-center font-['Noto_Sans',sans-serif] text-[14.5px] text-[#222]">
        <svg className="ml-[6px]" width="20" height="26" viewBox="0 0 20 26" fill="none">
          <rect x="6" y="1.5" width="12" height="15" rx="2" stroke="#1e9ad6" strokeWidth="3" />
          <rect x="1.5" y="8" width="12" height="16" rx="2" stroke="#f59a00" strokeWidth="3" />
        </svg>
        <span className="ml-[21px]">Server_Contabilidad - VMware Workstation</span>
        <div className="flex-1" />
        <div className="flex items-center pr-[10px]">
          <div className="w-[9px] h-px bg-[#222]" />
          <svg className="ml-[20px]" width="11" height="12" viewBox="0 0 11 12" fill="none" stroke="#222"><path d="M3 3V1h7v8H8M1 3h7v8H1z" /></svg>
          <svg className="ml-[20px]" width="11" height="11" viewBox="0 0 11 11" stroke="#222"><path d="M0 0l11 11M11 0L0 11" /></svg>
        </div>
      </div>
      <Toolbar />
      <div className="flex-1 flex min-h-0">
        <Library />
        <VmArea />
      </div>
      <StatusBar />
      <Taskbar />
    </div>
  );
}
